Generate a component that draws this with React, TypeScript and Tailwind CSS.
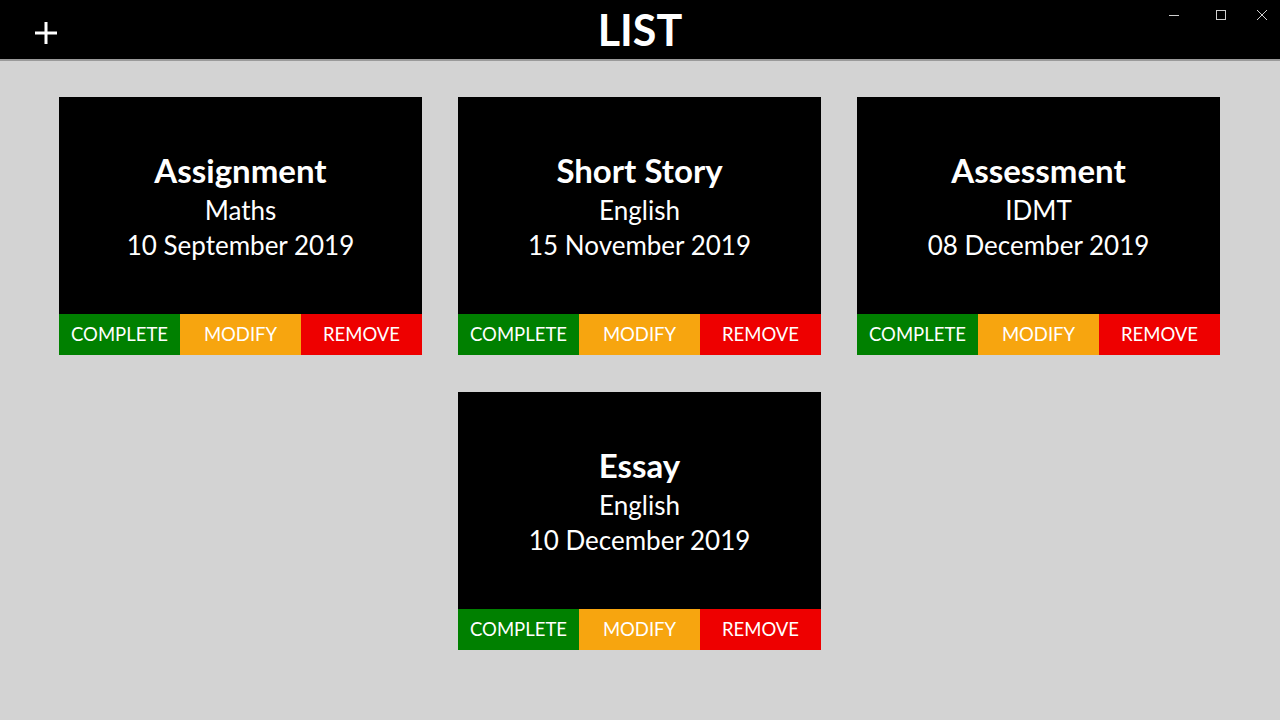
import React from 'react';

type Task = { title: string; subject: string; due: string };

const tasks: Task[] = [
  { title: 'Assignment', subject: 'Maths', due: '10 September 2019' },
  { title: 'Short Story', subject: 'English', due: '15 November 2019' },
  { title: 'Assessment', subject: 'IDMT', due: '08 December 2019' },
  { title: 'Essay', subject: 'English', due: '10 December 2019' },
];

const TaskCard: React.FC<{ task: Task }> = ({ task }) => (
  <div className="w-[363px] h-[258px] flex flex-col bg-black">
    <div className="flex-1 flex flex-col items-center justify-center pb-[1px] text-white">
      <h2 className="text-[33px] leading-[44px] font-bold">{task.title}</h2>
      <div className="text-[26px] leading-[36px]">{task.subject}</div>
      <div className="text-[26px] leading-[34px]">{task.due}</div>
    </div>
    <div className="h-[41px] grid grid-cols-3 text-[18.5px] text-white">
      <button className="bg-[#008000] flex items-center justify-center">COMPLETE</button>
      <button className="bg-[#f7a50f] flex items-center justify-center">MODIFY</button>
      <button className="bg-[#ee0000] flex items-center justify-center">REMOVE</button>
    </div>
  </div>
);

export default function App() {
  return (
    <div className="w-[1280px] h-[720px] bg-[#d3d3d3] flex flex-col font-['Lato',sans-serif]">
      <header className="relative h-[61px] bg-black border-b-2 border-[#9a9a9a] flex items-center justify-center">
        <button className="absolute left-[34px] top-[21px] text-white" aria-label="Add">
          <svg width="24" height="24" viewBox="0 0 24 24">
            <path d="M12 1v22M1 12h22" stroke="white" strokeWidth="3" />
          </svg>
        </button>
        <h1 className="text-white text-[43px] font-bold leading-none pb-[1px]">LIST</h1>
        <div className="absolute right-0 top-0 flex text-[#cfcfcf]">
          <div className="w-[47px] h-[29px] flex items-center justify-center">
            <svg width="10" height="10" viewBox="0 0 10 10"><path d="M0 5.5h10" stroke="currentColor" /></svg>
          </div>
          <div className="w-[47px] h-[29px] flex items-center justify-center">
            <svg width="10" height="10" viewBox="0 0 10 10"><rect x="0.5" y="0.5" width="9" height="9" fill="none" stroke="currentColor" /></svg>
          </div>
          <div className="w-[36px] h-[29px] flex items-center justify-center">
            <svg width="10" height="10" viewBox="0 0 10 10"><path d="M0 0l10 10M10 0L0 10" stroke="currentColor" /></svg>
          </div>
        </div>
      </header>
      <main className="flex-1 pt-[36px]">
        <div className="flex flex-wrap justify-center gap-x-[36px] gap-y-[37px] w-[1161px] ml-[59px]">
          {tasks.map((t) => (
            <TaskCard key={t.title} task={t} />
          ))}
        </div>
      </main>
    </div>
  );
}
